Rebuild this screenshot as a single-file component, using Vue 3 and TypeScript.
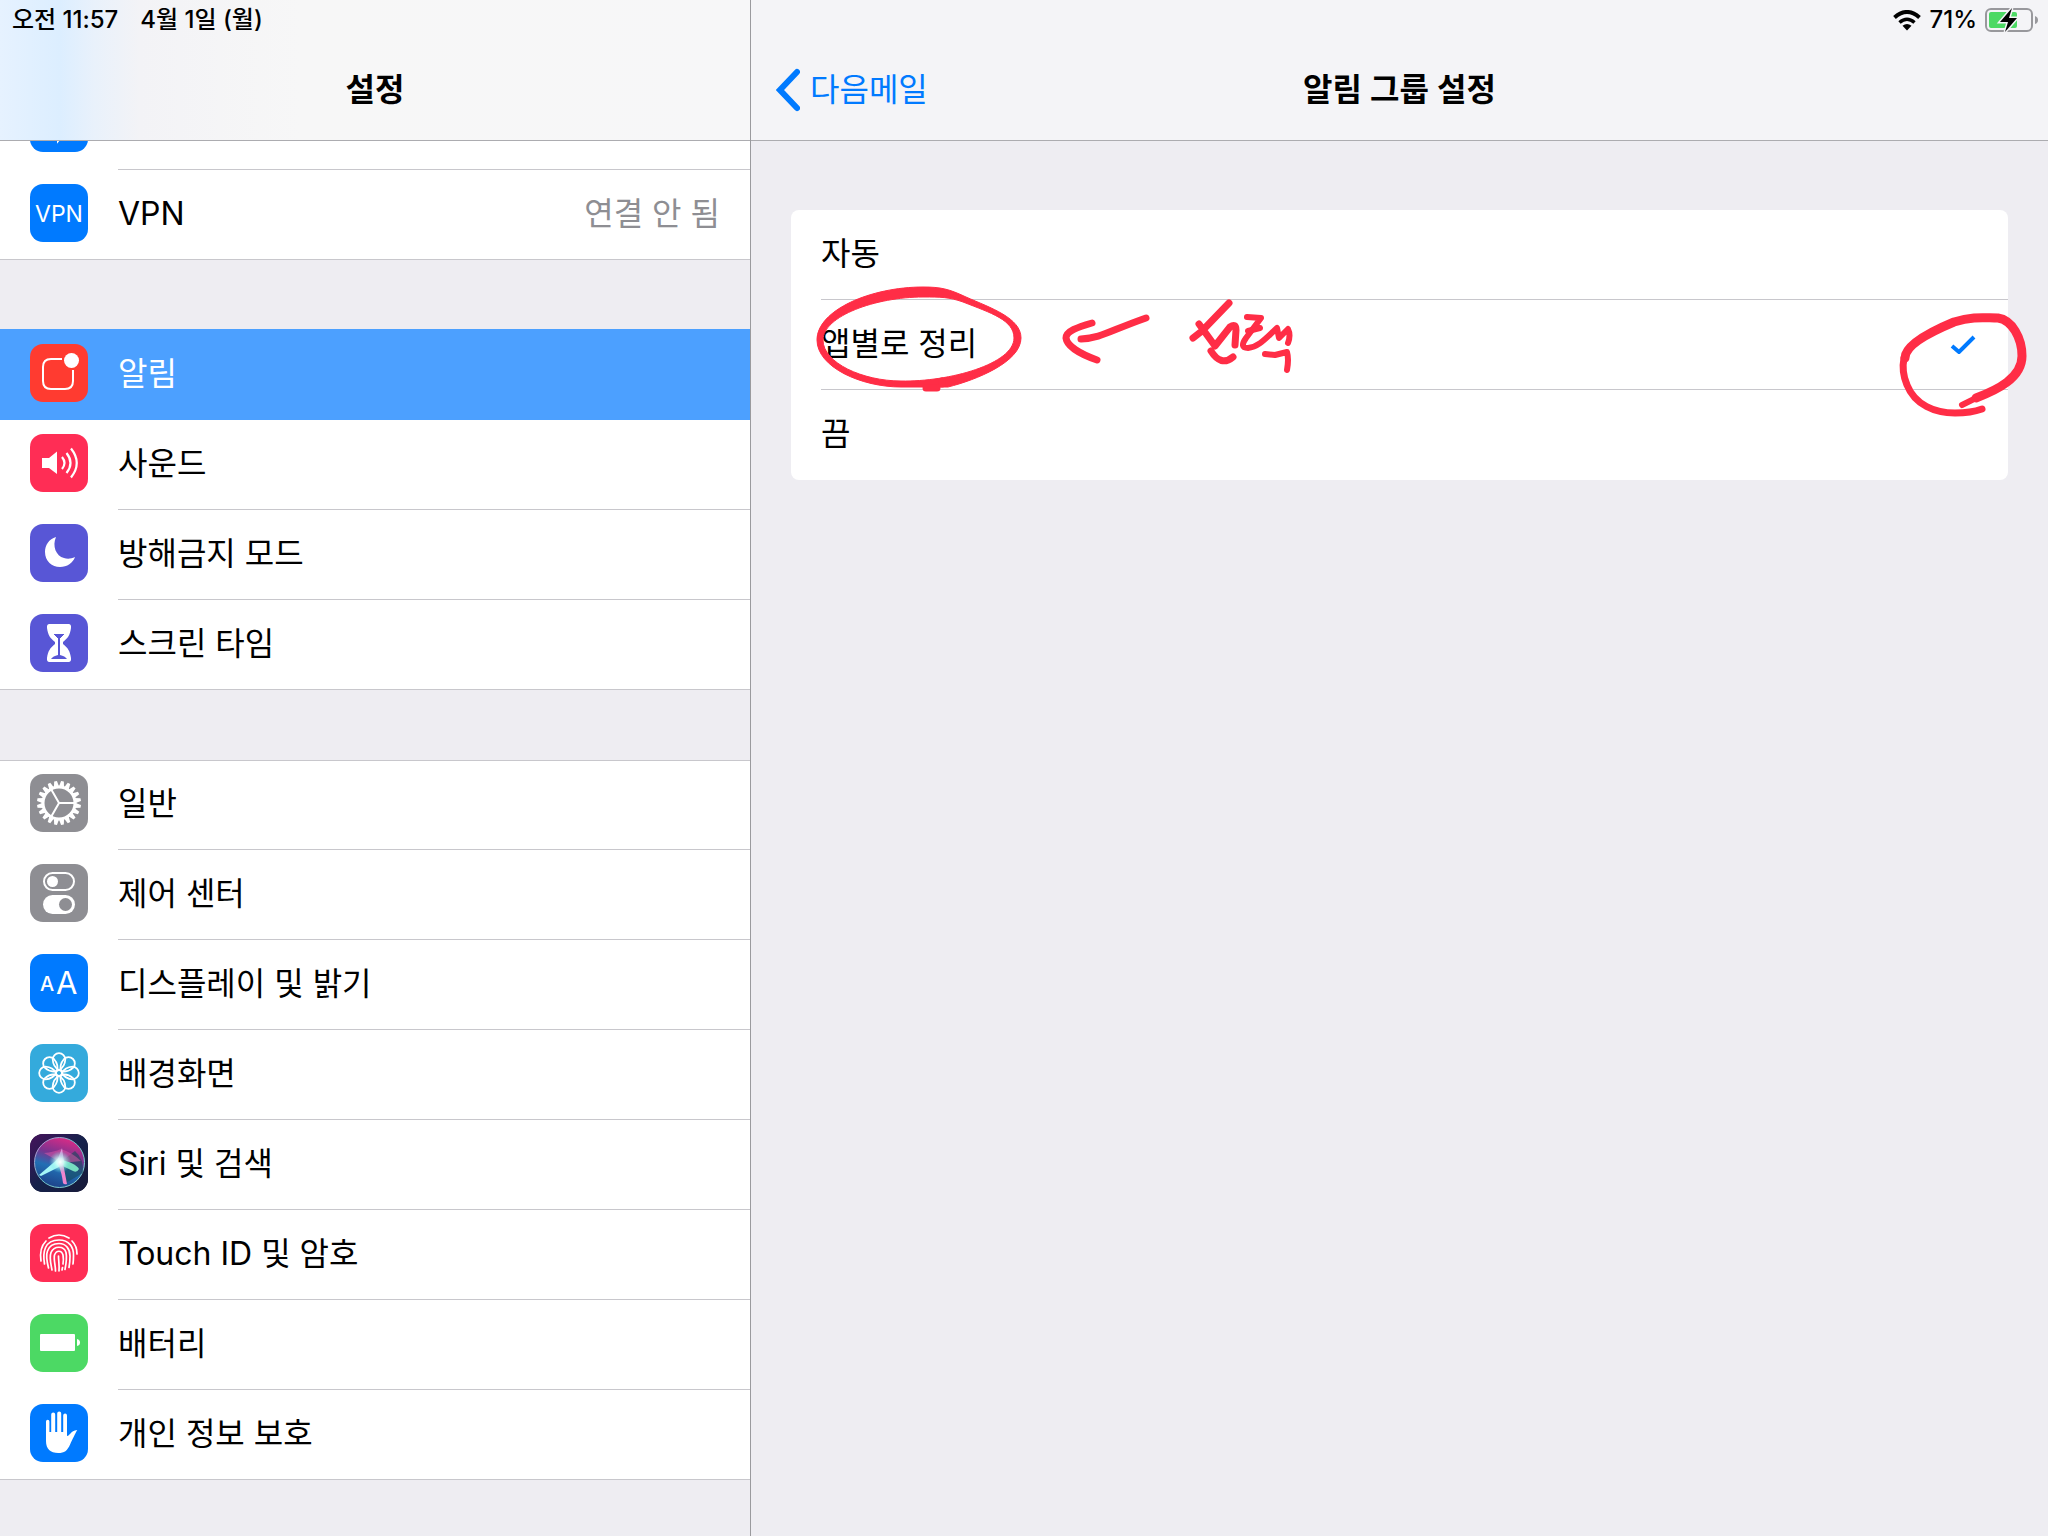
<script setup lang="ts">
import { ref } from 'vue'

type IconName =
  | 'bluetooth' | 'vpn' | 'notifications' | 'sound' | 'moon' | 'hourglass' | 'gear' | 'toggles'
  | 'display' | 'wallpaper' | 'siri' | 'touchid' | 'battery' | 'hand'

interface SettingsItem {
  label: string
  icon: IconName
  color: string
  value?: string
}

const groups: SettingsItem[][] = [
  [
    { label: '', icon: 'bluetooth', color: '#007aff' },
    { label: 'VPN', icon: 'vpn', color: '#007aff', value: '연결 안 됨' },
  ],
  [
    { label: '알림', icon: 'notifications', color: '#ff3b30' },
    { label: '사운드', icon: 'sound', color: '#ff2d55' },
    { label: '방해금지 모드', icon: 'moon', color: '#5856d6' },
    { label: '스크린 타임', icon: 'hourglass', color: '#5856d6' },
  ],
  [
    { label: '일반', icon: 'gear', color: '#8e8e93' },
    { label: '제어 센터', icon: 'toggles', color: '#8e8e93' },
    { label: '디스플레이 및 밝기', icon: 'display', color: '#007aff' },
    { label: '배경화면', icon: 'wallpaper', color: '#34aadc' },
    { label: 'Siri 및 검색', icon: 'siri', color: '#1b1b3a' },
    { label: 'Touch ID 및 암호', icon: 'touchid', color: '#ff2d55' },
    { label: '배터리', icon: 'battery', color: '#4cd964' },
    { label: '개인 정보 보호', icon: 'hand', color: '#007aff' },
  ],
]

const activeItem = ref('알림')

const options = ['자동', '앱별로 정리', '끔']
const grouping = ref('앱별로 정리')

const teeth = Array.from({ length: 20 }, (_, i) => i * 18 + 9)
const petals = Array.from({ length: 8 }, (_, i) => i * 45)
</script>

<template>
  <div class="settings">
    <aside class="sidebar">
      <header class="bar bar-left">
        <div class="status">
          <span>오전 11:57</span>
          <span>4월 1일 (월)</span>
        </div>
        <div class="nav"><h1 class="title">설정</h1></div>
      </header>

      <nav class="list">
        <div v-for="(group, g) in groups" :key="g" class="group">
          <a
            v-for="item in group"
            :key="item.icon"
            href="#"
            class="row"
            :class="{ active: item.label === activeItem }"
            @click.prevent="activeItem = item.label"
          >
            <svg class="icon" viewBox="0 0 58 58" :style="{ background: item.color }" aria-hidden="true">
              <g v-if="item.icon === 'bluetooth'" fill="none" stroke="#fff" stroke-width="2">
                <path d="M19 20 37 36 28 47V11l9 9-18 16" />
              </g>
              <text v-else-if="item.icon === 'vpn'" x="29" y="38" class="vpn" text-anchor="middle">VPN</text>
              <g v-else-if="item.icon === 'notifications'">
                <path
                  d="M32 15H21q-8 0-8 8v14q0 8 8 8h14q8 0 8-8V26"
                  fill="none" stroke="#fff" stroke-width="2"
                />
                <circle cx="41.500" cy="16.500" r="7.500" fill="#fff" />
              </g>
              <g v-else-if="item.icon === 'sound'" fill="none" stroke="#fff" stroke-width="2.200">
                <path d="M12 24h7l8-6.500v22.500l-8-6h-7z" fill="#fff" stroke="none" />
                <path d="M32 23q5 6 0 12M36.500 19q8 10 0 20M41 14.500q11.500 14.500 0 29" />
              </g>
              <path
                v-else-if="item.icon === 'moon'"
                d="M26 13C19 15 15 21 15 28c0 9 7 15 15 15 7 0 13-4 15-10-4 2-8 2-11 1-8-2-12-12-8-21z"
                fill="#fff"
              />
              <g v-else-if="item.icon === 'hourglass'">
                <path
                  d="M19.500 10h19q3 0 2.500 4c-1 7-3 10-8 14v2c5 4 7 7 8 14q.5 4-2.500 4h-19q-3 0-2.500-4c1-7 3-10 8-14v-2c-5-4-7-7-8-14q-.5-4 2.500-4z"
                  fill="#fff"
                />
                <path d="M24 20h10l-4 4v17q5 1 7 4H21q2-3 7-4V24z" fill="#5856d6" />
                <path d="M28 24 24 20M30 24l4-4M29 25v17" stroke="#5856d6" fill="none" />
              </g>
              <g v-else-if="item.icon === 'gear'">
                <path
                  v-for="angle in teeth" :key="angle"
                  d="M26.500 12.500 27.600 7h2.800l1.100 5.500z" fill="#fff" :transform="`rotate(${angle} 29 29)`"
                />
                <g fill="none" stroke="#fff" stroke-width="3">
                  <circle cx="29" cy="29" r="16" />
                  <path d="M29 29h16M29 29 21 15M29 29l-8 14" stroke-width="2" />
                </g>
              </g>
              <g v-else-if="item.icon === 'toggles'">
                <rect x="14" y="9" width="30" height="17" rx="8.500" fill="none" stroke="#fff" stroke-width="2" />
                <circle cx="22.500" cy="17.500" r="5.500" fill="#fff" />
                <rect x="13" y="31" width="32" height="19" rx="9.500" fill="#fff" />
                <circle cx="35.500" cy="40.500" r="6.500" fill="#8e8e93" />
              </g>
              <g v-else-if="item.icon === 'display'" class="aa">
                <text x="10" y="37" class="aa-small">A</text>
                <text x="26" y="40" class="aa-large">A</text>
              </g>
              <g v-else-if="item.icon === 'wallpaper'" fill="none" stroke="#fff" stroke-width="1.800">
                <path
                  v-for="angle in petals" :key="angle"
                  d="M29 26c-4-2-6-6-6.300-10.500a6.300 6.300 0 0 1 12.600 0c-.3 4.500-2.300 8.500-6.300 10.500z"
                  :transform="`rotate(${angle} 29 29)`"
                />
                <circle cx="29" cy="29" r="3" />
              </g>
              <g v-else-if="item.icon === 'siri'">
                <defs>
                  <linearGradient id="siri-bg" x1="0" y1="0" x2="1" y2="1">
                    <stop offset="0" stop-color="#46125c" />
                    <stop offset=".5" stop-color="#15214a" />
                    <stop offset="1" stop-color="#171a38" />
                  </linearGradient>
                  <linearGradient id="siri-orb" x1=".6" y1="0" x2=".3" y2="1">
                    <stop offset="0" stop-color="#d92b86" />
                    <stop offset=".35" stop-color="#7a3390" />
                    <stop offset=".6" stop-color="#226fb4" />
                    <stop offset="1" stop-color="#1d3f86" />
                  </linearGradient>
                  <linearGradient id="siri-ring" x1="0" y1="0" x2="1" y2="1">
                    <stop offset="0" stop-color="#c78ad6" />
                    <stop offset=".5" stop-color="#6fc3c9" />
                    <stop offset="1" stop-color="#8fd6d6" />
                  </linearGradient>
                  <radialGradient id="siri-glow">
                    <stop offset="0" stop-color="#fff" />
                    <stop offset=".35" stop-color="#d5fff8" stop-opacity=".85" />
                    <stop offset="1" stop-color="#5fe0e0" stop-opacity="0" />
                  </radialGradient>
                </defs>
                <rect width="58" height="58" fill="url(#siri-bg)" />
                <circle cx="29.500" cy="28.500" r="25" fill="url(#siri-orb)" stroke="url(#siri-ring)" stroke-width="1" />
                <path d="M31 28 45 17q9 8 8 22L34 50z" fill="#154a5c" opacity=".6" />
                <path d="M28 27 14 19q10-1 17-4 12 4 20 12l-18 2z" fill="#e05aa8" opacity=".5" />
                <path d="M29 24 9 41l2 1 22-11z" fill="#a5f7f7" />
                <path d="M28 25q18 4 21 10-2 4-6 2-8-4-15-7z" fill="#7fecc8" opacity=".9" />
                <path d="M28 29h5l4 21q-3 1-4-1-1-9-5-20z" fill="#ee86cf" />
                <path d="M27 27 32 14l2 14z" fill="#e9a8e6" opacity=".8" />
                <circle cx="30" cy="28" r="11" fill="url(#siri-glow)" />
              </g>
              <g v-else-if="item.icon === 'touchid'" fill="none" stroke="#fff" stroke-width="1.700" stroke-linecap="round">
                <path d="M19 14q10-6 20 0" />
                <path d="M11 37q-2-13 5-20M42 17q5 5 5 13" />
                <path d="M14.500 40c-2-12 0-24 14.500-24 10 0 15 7 14.500 16q0 4-.5 8" />
                <path d="M18.500 44c-1-4-3-12-1-17 2-6 7-7.500 11.500-7.500 7 0 11 5.500 11 12.500q0 6-1 11.500" />
                <path d="M22 46c-1-6-3-12-1-17.500 3-7 13-7 15 0 1 5 0 12-1 17" />
                <path d="M25.500 47c0-6-2-11-1-16 2-5 7-5 8.500 0 .5 3 .5 6 0 9" />
                <path d="M29 47c.5-6-.5-10-.5-15M32.500 43.500 32 46" />
              </g>
              <g v-else-if="item.icon === 'battery'" fill="#fff">
                <rect x="10" y="20" width="35" height="17" rx="1" />
                <path d="M47 25q3 .5 3 3.500t-3 3.500z" />
              </g>
              <path
                v-else
                d="M16 29V17.500a1.700 1.700 0 0 1 3.400 0V28h1.800V10.500a2 2 0 0 1 4 0V28h2V9.500a2 2 0 0 1 4 0V28h2V11.500a1.900 1.900 0 0 1 3.800 0V32c3 0 3-5 10.300-6-2 3-5 10-7 14-3 7-6 9-12 9-8 0-12.300-4-12.300-12z"
                fill="#fff"
              />
            </svg>
            <span class="row-body">
              <span>{{ item.label }}</span>
              <span v-if="item.value" class="value">{{ item.value }}</span>
            </span>
          </a>
        </div>
      </nav>
    </aside>

    <main class="detail">
      <header class="bar bar-right">
        <div class="status status-right">
          <svg width="28" height="21" viewBox="0 0 28 21" aria-label="Wi-Fi">
            <g fill="none" stroke="#000" stroke-width="4">
              <path d="M1.500 7.500Q14-3.500 26.500 7.500" />
              <path d="M6.500 12.500q7.500-6.500 15 0" stroke-width="3.500" />
            </g>
            <path d="M9.500 15.700q4.500-3.400 9 0L14 20.500z" />
          </svg>
          <span>71%</span>
          <svg width="54" height="26" viewBox="0 0 54 26" aria-label="배터리 충전 중">
            <rect x="1" y="2" width="46" height="22" rx="5" fill="none" stroke="#98989c" stroke-width="2" />
            <rect x="4" y="5" width="28" height="16" rx="2" fill="#4cd964" />
            <path d="M50 9q3 1 3 4t-3 4z" fill="#98989c" />
            <path d="M27 1 15 15h8l-3 10 12-14h-8z" stroke="#f4f4f7" stroke-width="3" paint-order="stroke" />
          </svg>
        </div>
        <div class="nav">
          <button type="button" class="back">
            <svg width="24" height="44" viewBox="0 0 24 44" aria-hidden="true">
              <path d="M21 4 4 22l17 18" fill="none" stroke="currentColor" stroke-width="6" stroke-linecap="round" />
            </svg>
            다음메일
          </button>
          <h2 class="title">알림 그룹 설정</h2>
        </div>
      </header>

      <form class="card">
        <label v-for="option in options" :key="option" class="option">
          <input v-model="grouping" type="radio" name="grouping" :value="option" />
          <span class="option-body">
            {{ option }}
            <svg v-if="grouping === option" width="26" height="20" viewBox="0 0 26 20" aria-hidden="true">
              <path d="M2 12l7 6L24 3" fill="none" stroke="#007aff" stroke-width="4" />
            </svg>
          </span>
        </label>

        <svg class="ink ink-left" width="520" height="190" viewBox="0 0 520 190" aria-label="선택">
          <path
            fill-rule="evenodd" fill="#ff2d46" stroke="#ff2d46" stroke-width="1"
            d="M26 130C26 100 80 77 132 77c18 0 26 2 43 10 25 11 55 21 55 41 0 24-45 42-73 49l-47 0C70 177 26 157 26 130zM32 130c0 23 40 41 78 41 48 1 113-17 113-43 0-18-23-25-51-36-14-5-22-5-40-5-47 0-100 19-100 43z"
          />
          <g fill="none" stroke="#ff2d46" stroke-width="7" stroke-linecap="round" stroke-linejoin="round">
            <path d="M151 171v3M135 178h11" />
            <path d="M290 129c20-1 28-8 65-21" />
            <path d="M301 113c-14 4-26 8-26 15 1 8 14 16 31 22" />
            <path d="M438 93 411 121l-9 7M408 114l16 22 15-19q6-4 6 3l-1 15" />
            <path d="M420 141q10 16 22 6" />
            <path d="M456 107l14 1-15 20q-7 10 2 10c11-1 19-11 29-20l2 10 9-9q3 6 0 14" stroke-width="6" />
            <path d="M457 121l12-3M474 144l10 1 12-3q2 7 0 18" stroke-width="6" />
          </g>
        </svg>
        <svg class="ink ink-right" width="168" height="140" viewBox="0 0 168 140" aria-hidden="true">
          <g fill="none" stroke="#ff2d46" stroke-linecap="round">
            <path d="M25 68c0-13 25-26 49-36 20-6 30-4 44-4 14 2 24 20 24 38 0 22-25 34-46 42" stroke-width="9" />
            <path d="M142 66c0 22-25 34-46 42l-14 7" stroke-width="6" />
            <path d="M24 68c-2 10 0 20 3 27 8 20 28 28 48 28q16 0 27-4" stroke-width="7" />
          </g>
        </svg>
      </form>
    </main>
  </div>
</template>

<style>
body {
  margin: 0;
  background: #efeff4;
}
</style>

<style scoped>
.settings {
  display: flex;
  height: 100vh;
  overflow: hidden;
  background: #eeedf2;
  color: #000;
  font-family: Inter, "Noto Sans CJK KR", sans-serif;
  font-size: 32px;
  line-height: 40px;
}

.sidebar {
  display: flex;
  flex-direction: column;
  flex: 0 0 750px;
  border-right: 1px solid #9a9a9e;
}

.detail {
  flex: 1;
  min-width: 0;
}

.bar {
  position: relative;
  z-index: 1;
  flex: none;
  border-bottom: 1px solid #acacb0;
}

.bar-left {
  background: linear-gradient(90deg, #e6f2ff 0, #dceeff 60px, #e9f1fb 95px, #f3f3f6 140px, #f7f7f7 300px, #f7f7f8 100%);
}

.bar-right {
  background: #f4f4f7;
}

.status {
  display: flex;
  align-items: center;
  gap: 22px;
  height: 40px;
  padding: 0 12px;
  font-size: 24px;
  font-weight: 500;
}

.status-right {
  justify-content: flex-end;
  gap: 8px;
  padding-right: 9px;
}

.nav {
  display: flex;
  align-items: center;
  justify-content: center;
  position: relative;
  height: 100px;
}

.title {
  margin: 0;
  font-size: 32px;
  font-weight: 600;
}

.back {
  display: flex;
  align-items: center;
  gap: 10px;
  position: absolute;
  left: 25px;
  padding: 0;
  border: 0;
  background: none;
  color: #007aff;
  font: inherit;
}

/* The list is scrolled, so its first row sits partly under the bar. */
.list {
  display: flex;
  flex-direction: column;
  gap: 70px;
  margin-top: -61px;
}

.group {
  background: #fff;
}

.group + .group {
  box-shadow: inset 0 1px #c8c7cc;
}

.row {
  display: flex;
  height: 90px;
  color: inherit;
  text-decoration: none;
}

.icon {
  flex: none;
  width: 58px;
  height: 58px;
  margin: 14px 30px 0;
  border-radius: 13px;
}

.row-body {
  display: flex;
  flex: 1;
  align-items: center;
  justify-content: space-between;
  padding: 0 30px 2px 0;
  border-bottom: 1px solid #c8c7cc;
}

.row:last-child {
  box-shadow: inset 0 -1px #c8c7cc;
}

.value {
  color: #8e8e93;
}

.active {
  background: #4ca0ff;
  box-shadow: 0 -1px #4ca0ff;
  color: #fff;
}

.active .row-body {
  border-color: transparent;
}

.vpn {
  fill: #fff;
  font-size: 23px;
}

.aa {
  fill: #fff;
}

.aa-small {
  font-size: 20px;
  font-weight: 500;
}

.aa-large {
  font-size: 31px;
}

.card {
  position: relative;
  margin: 69px 40px 0;
  border-radius: 8px;
  background: #fff;
}

.option {
  display: block;
  padding-left: 30px;
}

.option input {
  position: absolute;
  opacity: 0;
}

.option-body {
  display: flex;
  align-items: center;
  justify-content: space-between;
  height: 87px;
  padding: 0 32px 2px 0;
  border-bottom: 1px solid #c8c7cc;
}

.option:nth-child(3) .option-body {
  border-color: transparent;
}

.ink {
  position: absolute;
  pointer-events: none;
}

.ink-left {
  top: 0;
  left: 0;
}

.ink-right {
  top: 80px;
  right: -40px;
}
</style>
